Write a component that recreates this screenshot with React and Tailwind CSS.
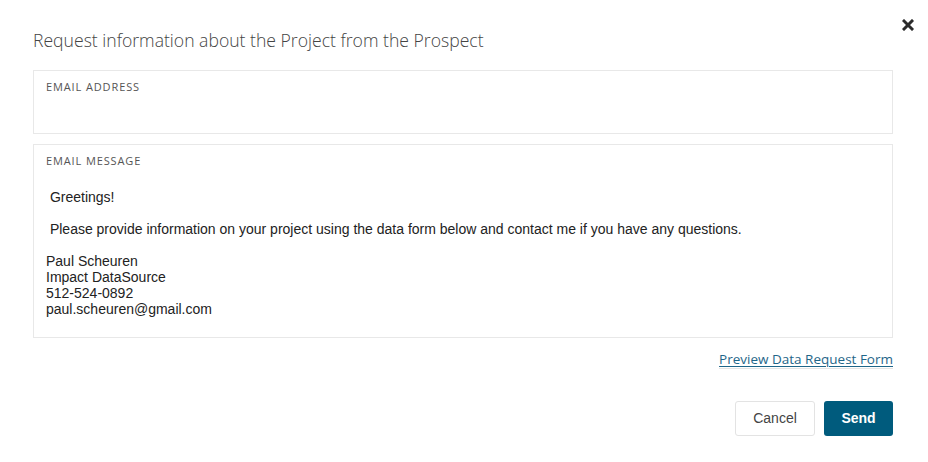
function CloseIcon() {
  return (
    <svg width="12" height="12" viewBox="0 0 12 12" fill="none">
      <path d="M2 2 L10 10 M10 2 L2 10" stroke="#2b2b2b" strokeWidth="3" strokeLinecap="square" />
    </svg>
  );
}

export default function App() {
  return (
    <div className="relative min-h-screen bg-white px-[33px] pt-[27px] pb-6 font-['Open_Sans',sans-serif]">
      <button className="absolute right-[14px] top-[19px] p-0">
        <CloseIcon />
      </button>

      <h1 className="text-[17.6px] font-light leading-[26px] text-[#444]">
        Request information about the Project from the Prospect
      </h1>

      <div className="mt-[17px] w-[860px] border border-[#e8e8e8] bg-white px-3 pt-2 pb-2">
        <label className="block text-[11px] leading-4 tracking-[0.08em] text-[#555]">EMAIL ADDRESS</label>
        <input className="block h-[30px] w-full outline-none" />
      </div>

      <div className="mt-[10px] w-[860px] border border-[#e8e8e8] bg-white px-3 pt-2 pb-[20px]">
        <label className="block text-[11px] leading-4 tracking-[0.08em] text-[#555]">EMAIL MESSAGE</label>
        <div className="mt-5 font-['Liberation_Sans',Arial,sans-serif] text-[14px] leading-4 text-[#222]">
          <p>{"\u00a0"}Greetings!</p>
          <p className="mt-4">
            {"\u00a0"}Please provide information on your project using the data form below and contact me if you have any questions.
          </p>
          <p className="mt-4">
            Paul Scheuren
            <br />
            Impact DataSource
            <br />
            512-524-0892
            <br />
            paul.scheuren@gmail.com
          </p>
        </div>
      </div>

      <div className="mt-[13px] flex w-[860px] justify-end">
        <a href="#" className="border-b border-[#e6e6e6] pb-[1px] text-[13.5px] leading-4 text-[#1f6689] underline underline-offset-2">
          Preview Data Request Form
        </a>
      </div>

      <div className="mt-[32px] flex w-[860px] justify-end gap-[9px] font-['Liberation_Sans',Arial,sans-serif] text-[14px]">
        <button className="h-[35px] w-[80px] rounded-[3px] border border-[#e3e3e3] bg-white text-[#444]">Cancel</button>
        <button className="h-[35px] w-[69px] rounded-[3px] bg-[#005b7d] font-bold text-white">Send</button>
      </div>
    </div>
  );
}
